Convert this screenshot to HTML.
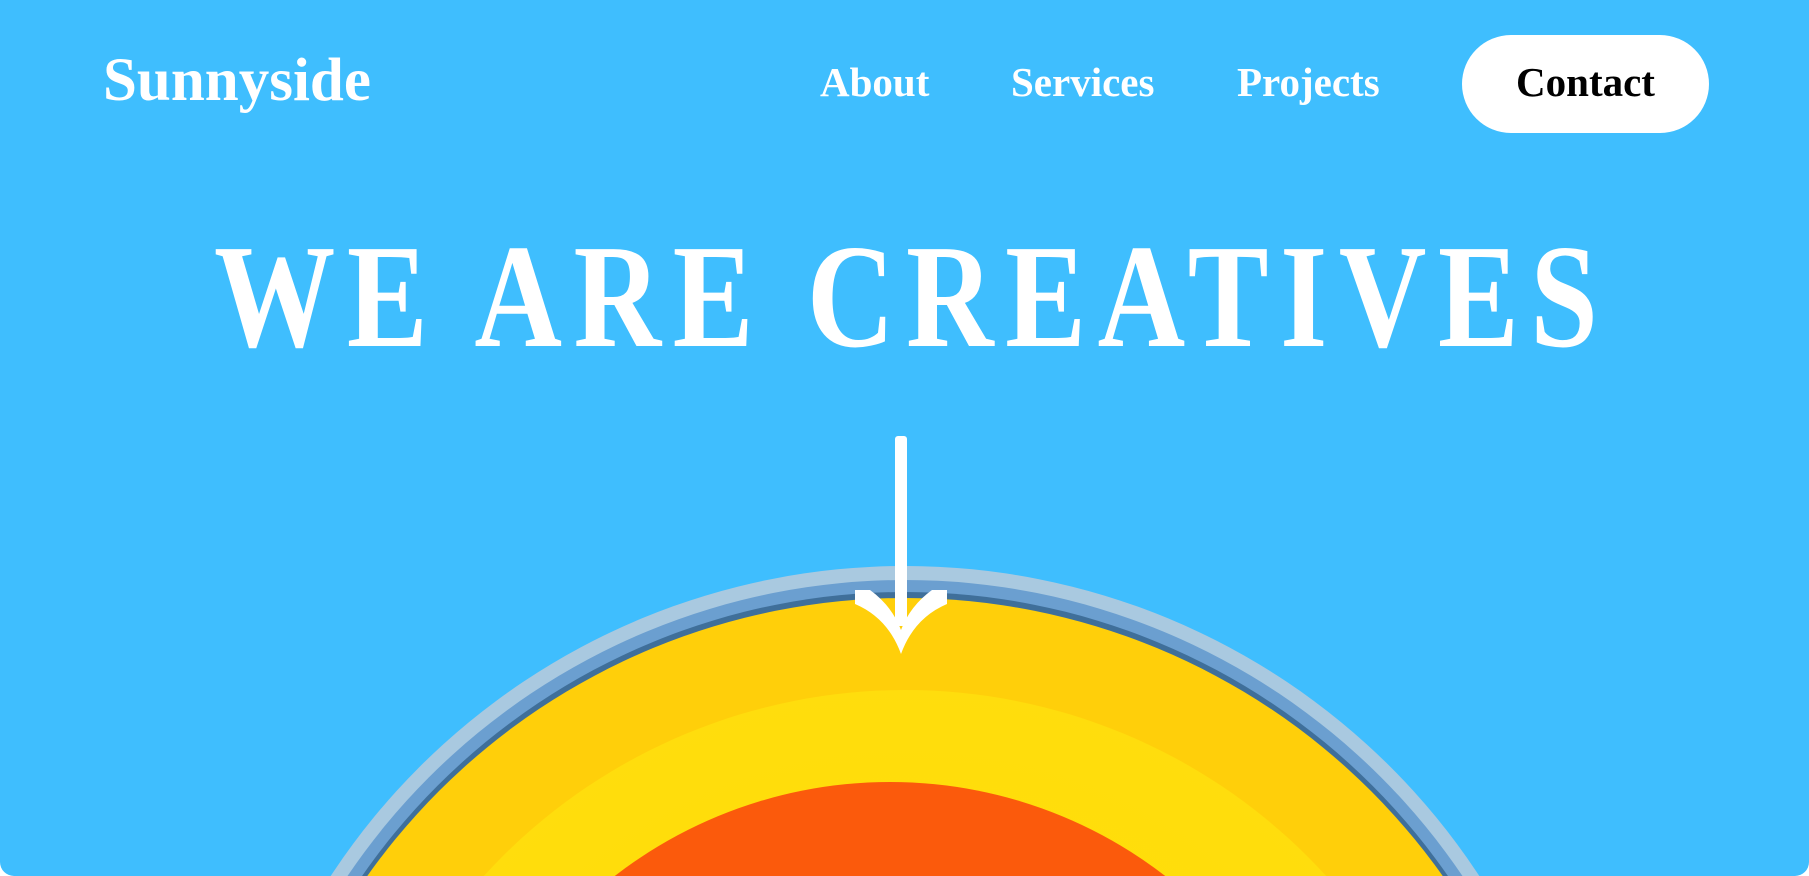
<!DOCTYPE html>
<html><head><meta charset="utf-8"><style>
html,body{margin:0;padding:0;width:1809px;height:876px;overflow:hidden;background:#fff}
.page{position:absolute;left:0;top:0;width:1809px;height:876px;background:#3fbefe;overflow:hidden;border-radius:0 0 14px 14px}
.t{position:absolute;font-family:"Liberation Serif","Times New Roman",serif;font-weight:bold;color:#fff;white-space:nowrap}
.c{position:absolute;border-radius:50%}
</style></head><body><div class="page">
<div class="c" style="left:218px;top:566px;width:1374px;height:1374px;background:radial-gradient(circle,#a9c9e0 0,#a9c9e0 97%,#c7d9e3 100%)"></div>
<div class="c" style="left:232px;top:580px;width:1346px;height:1346px;background:#6b9fd0"></div>
<div class="c" style="left:244px;top:592px;width:1322px;height:1322px;background:#3f6f9a"></div>
<div class="c" style="left:246px;top:598px;width:1318px;height:1318px;background:radial-gradient(circle,#ffcf0a 0,#ffcf0a 78%,#ffbd0a 88%,#ffb60a 100%)"></div>
<div class="c" style="left:335px;top:690px;width:1140px;height:1140px;background:radial-gradient(circle,#ffe000 0,#ffdc10 88%,#ffc707 100%)"></div>
<div class="c" style="left:440px;top:782px;width:900px;height:900px;background:#fb5a0c"></div>
<div class="t" style="left:103px;top:46px;font-size:61px">Sunnyside</div>
<div class="t" style="left:820px;top:58px;font-size:41px">About</div>
<div class="t" style="left:1011px;top:58px;font-size:41px">Services</div>
<div class="t" style="left:1237px;top:58px;font-size:41px">Projects</div>
<div style="position:absolute;left:1462px;top:35px;width:247px;height:98px;background:#fff;border-radius:49px"></div>
<div class="t" style="left:1462px;top:58px;width:247px;text-align:center;font-size:41px;color:#000">Contact</div>
<div class="t" style="left:214px;top:212px;font-size:148px;letter-spacing:14px;transform:scaleX(0.82);transform-origin:0 0">WE ARE CREATIVES</div>
<svg style="position:absolute;left:840px;top:430px" width="120" height="230" viewBox="0 0 120 230">
<rect x="55" y="6" width="12" height="190" rx="3" fill="#fff"/>
<path d="M15 160 L30 160 Q52 176 61 200 Q70 176 92 160 L107 160 L107 174 Q74 188 61 224 Q48 188 15 174 Z" fill="#fff"/>
</svg>
</div></body></html>
